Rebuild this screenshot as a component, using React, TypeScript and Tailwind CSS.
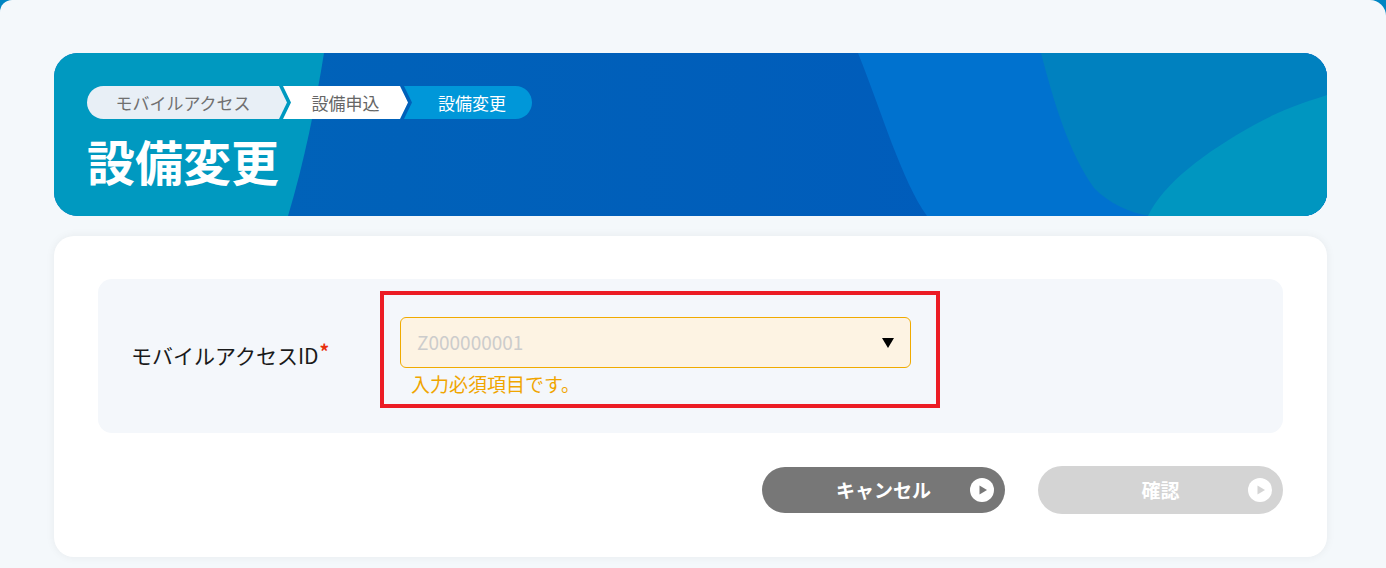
import React from 'react';

const font = { fontFamily: '"Noto Sans CJK JP", "Noto Sans", sans-serif' };

function PlayIcon({ color }: { color: string }) {
  return (
    <svg width="24" height="24" viewBox="0 0 24 24">
      <circle cx="12" cy="12" r="12" fill="#ffffff" />
      <polygon points="9.5,7.5 17,12 9.5,16.5" fill={color} />
    </svg>
  );
}

function BannerShapes() {
  return (
    <svg
      className="absolute inset-0 w-full h-full"
      viewBox="0 0 1273 163"
      preserveAspectRatio="none"
    >
      <defs>
        <linearGradient id="deep" x1="0" y1="0" x2="1" y2="0">
          <stop offset="0" stopColor="#0064b8" />
          <stop offset="1" stopColor="#0059bc" />
        </linearGradient>
      </defs>
      <rect x="0" y="0" width="1273" height="163" fill="url(#deep)" />
      <path d="M804 0 C 828 60, 848 128, 873 163 L1273 163 L1273 0 Z" fill="#0072cf" />
      <path d="M987 0 C 1000 50, 1015 100, 1040 135 C 1055 150, 1075 160, 1096 163 L1273 163 L1273 0 Z" fill="#0081bf" />
      <path d="M1094 163 C 1110 130, 1150 100, 1200 72 C 1230 55, 1255 48, 1273 42 L1273 163 Z" fill="#0096c0" />
      <path d="M0 0 L270 0 C 262 50, 250 110, 234 163 L0 163 Z" fill="#0099c0" />
    </svg>
  );
}

export default function App() {
  return (
    <div className="bg-[#0085c2]" style={font}>
      <div className="min-h-[568px] bg-[#f4f8fb] rounded-tl-[12px] rounded-tr-[16px] pt-[53px] pl-[54px] pr-[59px] pb-[20px]">
        {/* Banner */}
        <div className="relative h-[163px] rounded-[24px] overflow-hidden">
          <BannerShapes />
          <div className="relative pt-[33px] pl-[33px]">
            <div className="flex h-[33px] text-[17px]">
              <div className="w-[200px] pr-[8px] flex items-center justify-center bg-[#e8eff6] text-[#707070] rounded-l-full [clip-path:polygon(0_0,calc(100%_-_8px)_0,100%_50%,calc(100%_-_8px)_100%,0_100%)]">
                モバイルアクセス
              </div>
              <div className="-ml-[4px] w-[125px] px-[8px] flex items-center justify-center bg-white text-[#666666] [clip-path:polygon(0_0,calc(100%_-_8px)_0,100%_50%,calc(100%_-_8px)_100%,0_100%,8px_50%)]">
                設備申込
              </div>
              <div className="-ml-[4px] w-[128px] pl-[8px] flex items-center justify-center bg-[#0097d9] text-white rounded-r-full [clip-path:polygon(0_0,100%_0,100%_100%,0_100%,8px_50%)]">
                設備変更
              </div>
            </div>
            <h1 className="mt-[13px] text-[48px] leading-[1.2] font-bold text-white">設備変更</h1>
          </div>
        </div>

        {/* Card */}
        <div className="mt-[20px] bg-white rounded-[20px] shadow-[0_0_10px_rgba(0,0,0,0.06)] pt-[43px] px-[44px] pb-[43px]">
          <div className="flex h-[154px] bg-[#f4f7fb] rounded-[14px]">
            <div className="w-[282px] pl-[33px] flex items-center">
              <span className="text-[21px] text-[#1a1a1a]">
                モバイルアクセスID
                <span className="relative top-[-5px] ml-[1px] text-[#e8300e] text-[19px] font-bold">*</span>
              </span>
            </div>
            <div className="mt-[12px] self-start w-[560px] h-[117px] border-[4px] border-[#ec1c24] pt-[22px] pl-[16px]">
              <div className="w-[511px] h-[51px] bg-[#fdf3e3] border border-[#f0aa00] rounded-[6px] flex items-center justify-between pl-[16px] pr-[16px]">
                <span className="text-[19px] text-[#cccccc]">Z000000001</span>
                <svg width="12" height="10" viewBox="0 0 12 10">
                  <polygon points="0,0 12,0 6,10" fill="#000000" />
                </svg>
              </div>
              <p className="mt-[4px] pl-[11px] text-[19px] leading-[24px] text-[#f0a500]">入力必須項目です。</p>
            </div>
          </div>

          <div className="mt-[33px] flex justify-end items-center gap-[33px]">
            <button className="relative w-[243px] h-[46px] rounded-full bg-[#777777] text-white text-[19px] font-bold flex items-center justify-center">
              キャンセル
              <span className="absolute right-[11px] top-1/2 -translate-y-1/2 flex">
                <PlayIcon color="#777777" />
              </span>
            </button>
            <button className="relative w-[245px] h-[48px] rounded-full bg-[#d4d4d4] text-white text-[19px] font-bold flex items-center justify-center">
              確認
              <span className="absolute right-[11px] top-1/2 -translate-y-1/2 flex">
                <PlayIcon color="#d4d4d4" />
              </span>
            </button>
          </div>
        </div>
      </div>
    </div>
  );
}
